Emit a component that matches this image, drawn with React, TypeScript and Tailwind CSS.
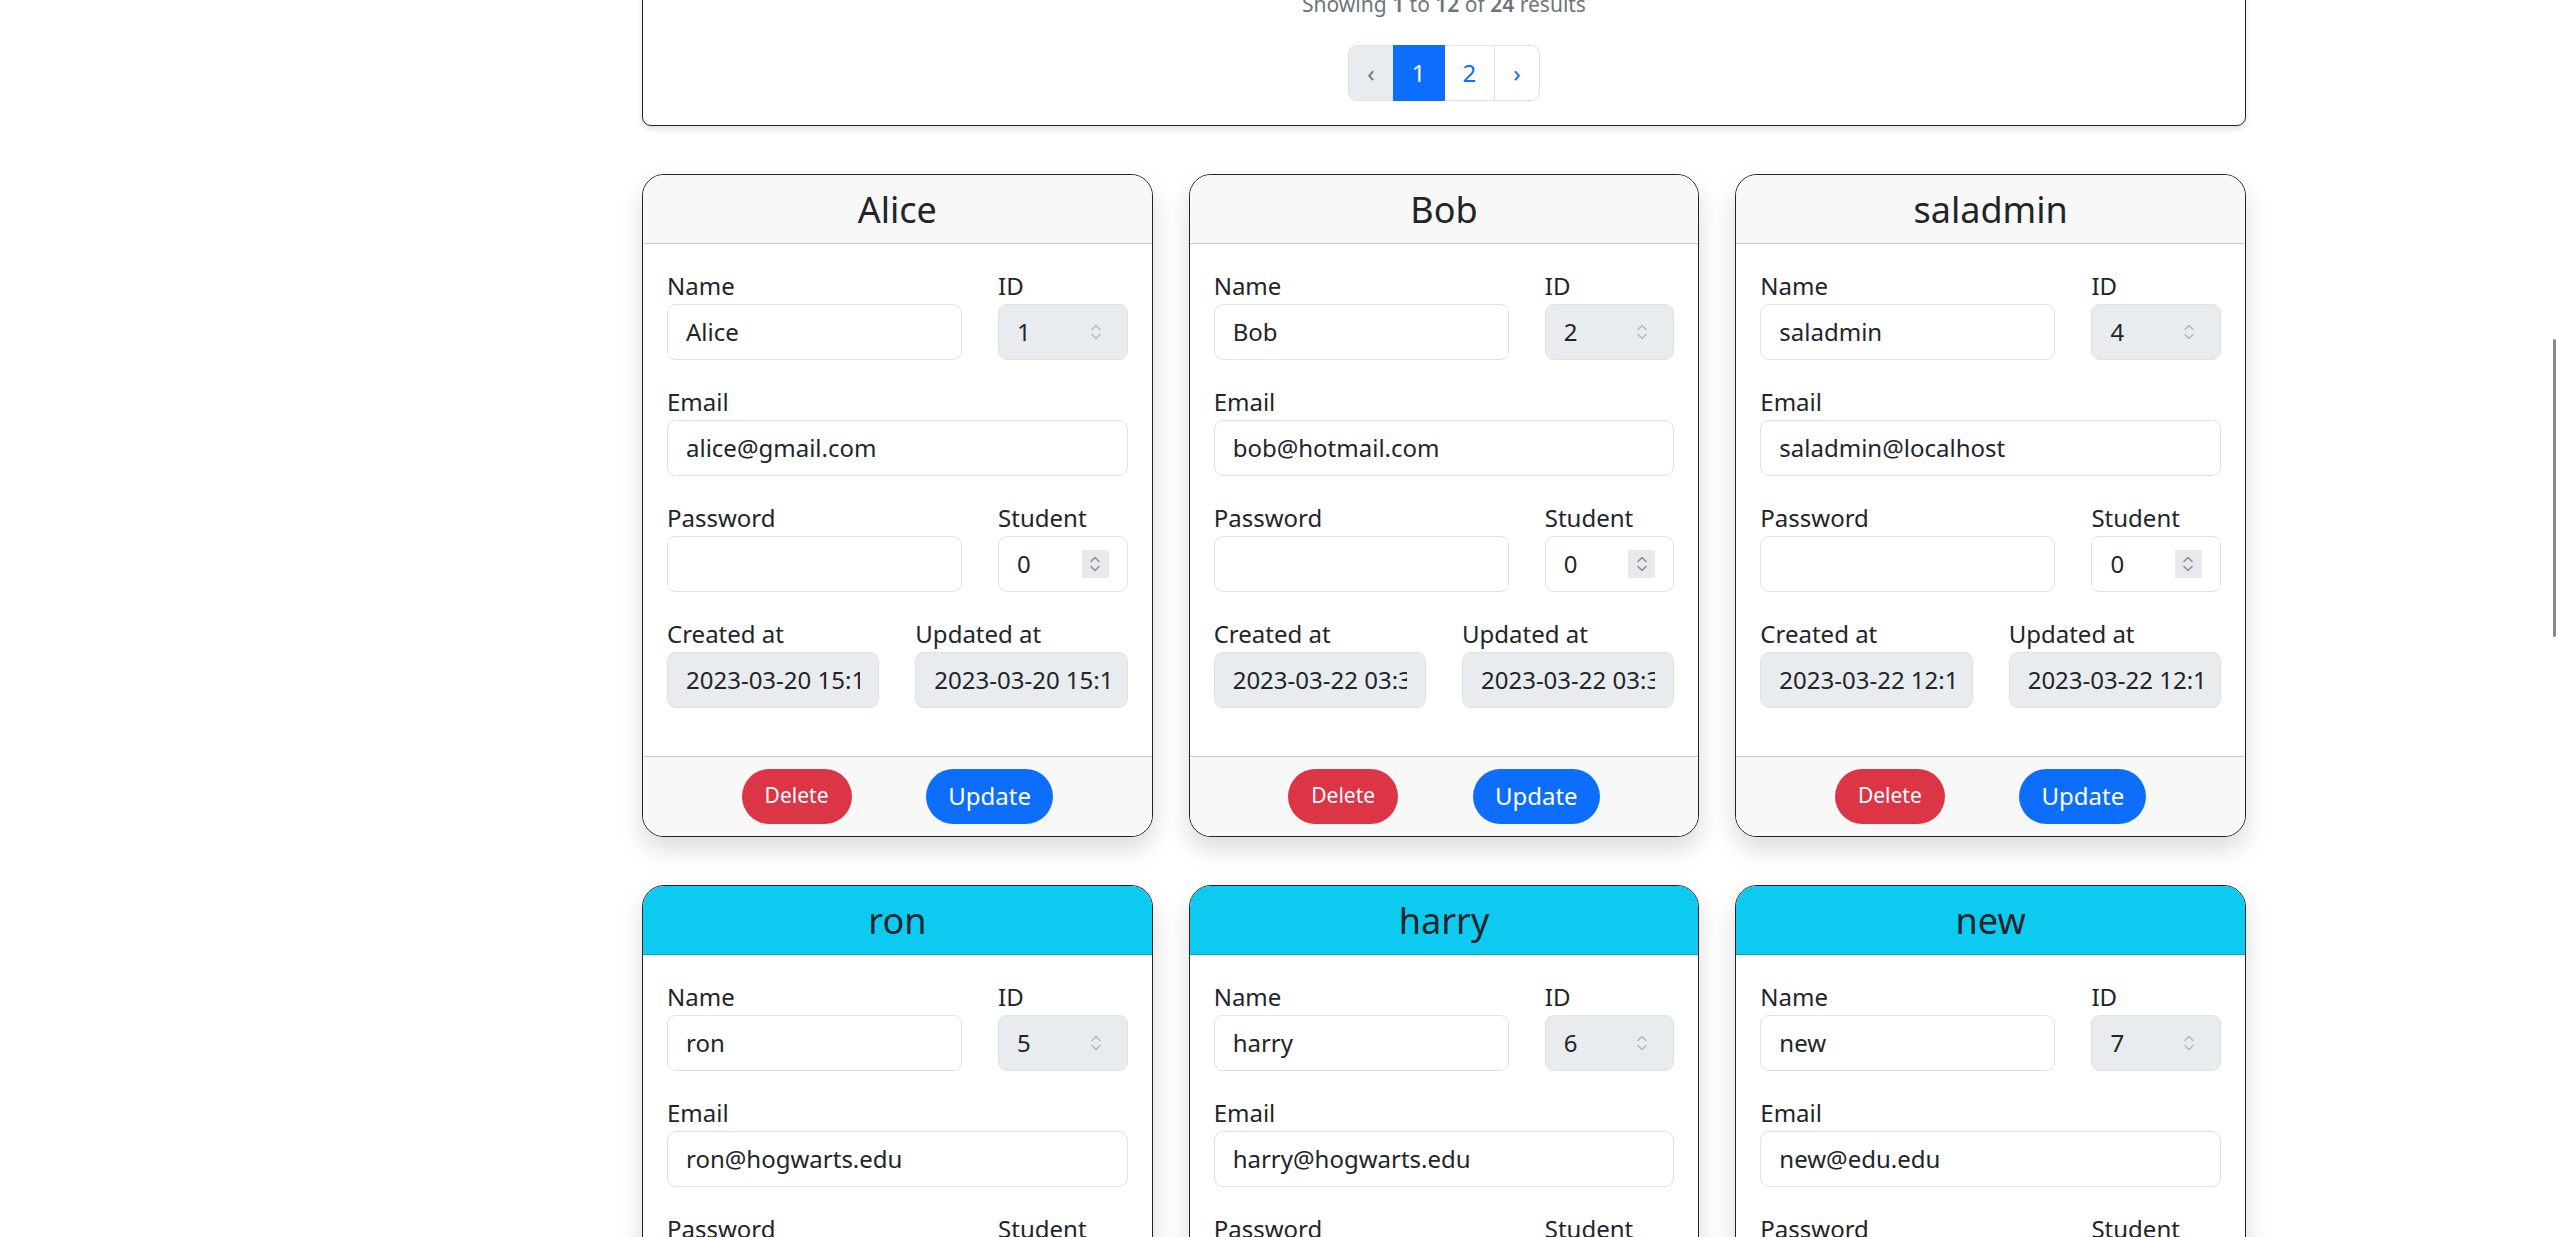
const users = [
  { name: "Alice", id: 1, email: "alice@gmail.com", created: "2023-03-20 15:12:41", updated: "2023-03-20 15:12:41", header: "bg-[#f8f8f8]" },
  { name: "Bob", id: 2, email: "bob@hotmail.com", created: "2023-03-22 03:35:10", updated: "2023-03-22 03:35:10", header: "bg-[#f8f8f8]" },
  { name: "saladmin", id: 4, email: "saladmin@localhost", created: "2023-03-22 12:18:02", updated: "2023-03-22 12:18:02", header: "bg-[#f8f8f8]" },
  { name: "ron", id: 5, email: "ron@hogwarts.edu", created: "2023-03-23 09:41:27", updated: "2023-03-23 09:41:27", header: "bg-[#0dcaf0]" },
  { name: "harry", id: 6, email: "harry@hogwarts.edu", created: "2023-03-23 09:44:03", updated: "2023-03-23 09:44:03", header: "bg-[#0dcaf0]" },
  { name: "new", id: 7, email: "new@edu.edu", created: "2023-03-24 17:02:55", updated: "2023-03-24 17:02:55", header: "bg-[#0dcaf0]" },
];

export default function App() {
  return (
    <div className="h-[1237px] overflow-hidden bg-white font-['Noto_Sans',sans-serif] text-[#212529]">
      <div className="ml-[642px] -mt-[36px] w-[1604px]">
        <div className="rounded-[9px] border border-[#212529] bg-white p-[24px] text-center shadow-[0_3px_6px_rgba(0,0,0,0.12)]">
          <p className="mb-[24px] text-[21px] leading-[31.5px] text-[#6c757d]">
            Showing <span className="font-semibold">1</span> to <span className="font-semibold">12</span> of{" "}
            <span className="font-semibold">24</span> results
          </p>
          <ul className="inline-flex text-[24px] leading-[36px]">
            <li className="flex h-[56px] items-center rounded-l-[9px] border border-[#dee2e6] bg-[#e9ecef] px-[18px] text-[#6c757d]">‹</li>
            <li className="z-10 -ml-px flex h-[56px] items-center border border-[#0d6efd] bg-[#0d6efd] px-[18px] text-white">1</li>
            <li className="-ml-px flex h-[56px] items-center border border-[#dee2e6] bg-white px-[18px] text-[#0d6efd]">2</li>
            <li className="-ml-px flex h-[56px] items-center rounded-r-[9px] border border-[#dee2e6] bg-white px-[18px] text-[#0d6efd]">›</li>
          </ul>
        </div>

        <div className="mt-[48px] grid grid-cols-3 gap-x-[36px] gap-y-[48px]">
          {users.map((u) => (
            <UserCard key={u.id} user={u} />
          ))}
        </div>
      </div>
      <div className="fixed right-[1px] top-[339px] h-[298px] w-[3px] rounded-full bg-[#8a8a8a]" />
    </div>
  );
}

type User = (typeof users)[number];

function Spinner({ boxed }: { boxed?: boolean }) {
  return (
    <span
      className={
        boxed
          ? "absolute right-[19px] top-[14px] flex h-[28px] w-[27px] items-center justify-center bg-[#e9e9ed]"
          : "absolute right-[27px] top-[19px] flex h-[18px] w-[10px] items-center justify-center"
      }
    >
      <svg width="10" height="18" viewBox="0 0 10 18" fill="none">
        <path
          d="M1 6.5 L5 2.5 L9 6.5 M1 11.5 L5 15.5 L9 11.5"
          stroke={boxed ? "#8e8e96" : "#b8b9bd"}
          strokeWidth="1.6"
          strokeLinecap="round"
          strokeLinejoin="round"
        />
      </svg>
    </span>
  );
}

function Field({
  label,
  value,
  span,
  disabled,
  spinner,
}: {
  label: string;
  value: string;
  span: string;
  disabled?: boolean;
  spinner?: "plain" | "boxed";
}) {
  return (
    <div className={`${span} mb-[24px]`}>
      <label className="block text-[24px] leading-[36px]">{label}</label>
      <div className="relative">
        <input
          readOnly
          value={value}
          className={`block h-[56px] w-full rounded-[9px] border border-[#dee2e6] px-[18px] text-[24px] leading-[36px] text-[#212529] outline-none ${
            disabled ? "bg-[#e9ecef]" : "bg-white"
          }`}
        />
        {spinner && <Spinner boxed={spinner === "boxed"} />}
      </div>
    </div>
  );
}

function UserCard({ user }: { user: User }) {
  return (
    <div className="overflow-hidden rounded-[22px] border border-[#212529] bg-white shadow-[0_12px_24px_rgba(0,0,0,0.15)]">
      <div className={`${user.header} border-b border-[rgba(0,0,0,0.175)] pb-[12px] pt-[13px] text-center text-[36px] font-normal leading-[43.2px]`}>
        {user.name}
      </div>
      <div className="grid grid-cols-12 gap-x-[36px] p-[24px]">
        <Field label="Name" value={user.name} span="col-span-8" />
        <Field label="ID" value={String(user.id)} span="col-span-4" disabled spinner="plain" />
        <Field label="Email" value={user.email} span="col-span-12" />
        <Field label="Password" value="" span="col-span-8" />
        <Field label="Student" value="0" span="col-span-4" spinner="boxed" />
        <Field label="Created at" value={user.created} span="col-span-6" disabled />
        <Field label="Updated at" value={user.updated} span="col-span-6" disabled />
      </div>
      <div className="flex items-center justify-evenly border-t border-[rgba(0,0,0,0.175)] bg-[#f8f8f8] px-[24px] py-[12px]">
        <button className="h-[55px] w-[110px] rounded-full bg-[#dc3545] text-[21px] text-white">Delete</button>
        <button className="h-[55px] w-[127px] rounded-full bg-[#0d6efd] text-[24px] text-white">Update</button>
      </div>
    </div>
  );
}
